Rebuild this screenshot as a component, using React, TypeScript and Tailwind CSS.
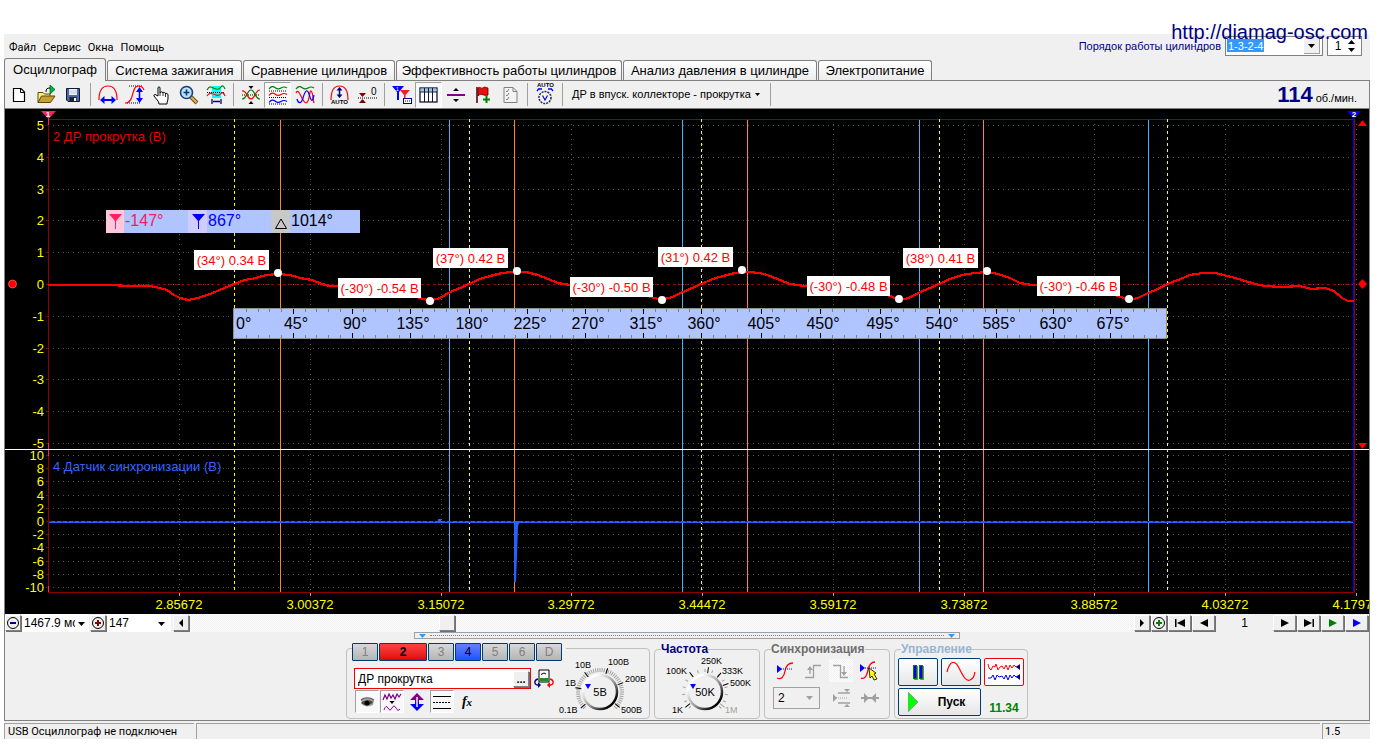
import type { ReactNode } from "react";
import clsx from "clsx";

const MENU = ["Файл", "Сервис", "Окна", "Помощь"];

const TABS = [
  { title: "Осциллограф", width: "w-[102px]" },
  { title: "Система зажигания", width: "w-[135px]" },
  { title: "Сравнение цилиндров", width: "w-[152px]" },
  { title: "Эффективность работы цилиндров", width: "w-[226px]" },
  { title: "Анализ давления в цилиндре", width: "w-[194px]" },
  { title: "Электропитание", width: "w-[114px]" },
];

const HATCH =
  "bg-[conic-gradient(#fff_25%,#f0f0f0_0_50%,#fff_0_75%,#f0f0f0_0)] bg-[length:2px_2px]";

const RAISED =
  "border border-t-white border-l-white border-r-[#808080] border-b-[#808080] bg-[#f0f0f0] shadow-[1px_1px_0_#707070]";

/* ---------- toolbar ---------- */

function Icon({ label, children }: { label: string; children: ReactNode }) {
  return (
    <svg
      viewBox="0 0 20 20"
      className="w-5 h-5 shrink-0 overflow-visible"
      fill="none"
      role="img"
      aria-label={label}
    >
      {children}
    </svg>
  );
}

function Tool({
  label,
  pressed,
  children,
}: {
  label: string;
  pressed?: boolean;
  children: ReactNode;
}) {
  return (
    <button
      type="button"
      aria-label={label}
      className={clsx(
        "w-[27px] h-[26px] flex items-center justify-center",
        pressed &&
          "border border-t-[#a0a0a0] border-l-[#a0a0a0] border-r-white border-b-white bg-[#f8f8f8]",
      )}
    >
      <Icon label={label}>{children}</Icon>
    </button>
  );
}

function Sep() {
  return <div className="w-px h-[23px] ml-1 mr-[3px] bg-[#a0a0a0]" />;
}

function Toolbar() {
  return (
    <div className="h-7 flex items-center border-b border-[#808080] pr-3">
      <Tool label="Новый">
        <path d="M4.500 3.500H12L15.500 7V16.500H4.500Z" fill="#fff" stroke="#000" strokeWidth="1.2" />
        <path d="M11.500 3.500V7.500H15.500" stroke="#000" />
      </Tool>
      <Tool label="Открыть">
        <path d="M2 17.500V7.500H7L8.500 9H14V11" fill="#ffec8b" stroke="#5a4a00" />
        <path d="M2 17.500L5.500 11H19L14.500 17.500Z" fill="#c8a032" stroke="#5a4a00" />
        <path d="M14 0V9L19 4.500Z" fill="#00b43c" stroke="#006420" strokeWidth=".8" />
        <path d="M10 7C10 4 11 3 14 3" stroke="#000" />
      </Tool>
      <Tool label="Сохранить">
        <path d="M3.500 3.500H16.500V16.500H5L3.500 15Z" fill="#4a68a8" stroke="#101830" />
        <rect x="6" y="4" width="8" height="6" fill="#f4f4ff" />
        <path d="M6 6H14M6 8H14" stroke="#9aa" strokeWidth=".6" />
        <rect x="6.500" y="12" width="7" height="4.500" fill="#222" />
        <rect x="11" y="13" width="2" height="3" fill="#fff" />
      </Tool>
      <Sep />
      <Tool label="Период">
        <path d="M1 15C1 3 6 1 10 1S19 3 19 15" stroke="#f00" strokeWidth="1.200" />
        <path d="M5 15H15" stroke="#00f" strokeWidth="2" />
        <path d="M2 15L6.500 11V19ZM18 15L13.500 11V19Z" fill="#00f" />
      </Tool>
      <Tool label="Амплитуда">
        <path d="M4 1H18M2 18H16" stroke="#000" strokeDasharray="1 1" />
        <path d="M0 18C10 18 6 1 13 1C16 1 18 2 19 5" stroke="#f00" strokeWidth="1.200" />
        <path d="M14.500 5V15" stroke="#00f" strokeWidth="1.600" />
        <path d="M14.500 2L18 7H11ZM14.500 18L18 13H11Z" fill="#00f" />
      </Tool>
      <Tool label="Рука">
        <path
          d="M6 11V3C6 1.500 8 1.500 8 3V8C8 6.500 11 6.500 11 8C11 7 13.500 7 13.500 9C13.500 8 16 8 16 10V13C16 16 15 16 15 19H7C7 16 4 14 2 11C1.500 9.500 3 9 4 10Z"
          fill="#fff"
          stroke="#000"
        />
        <path d="M8 8V11M11 8V11M13.500 9V12" stroke="#000" strokeWidth=".8" />
      </Tool>
      <Tool label="Масштаб">
        <path d="M12 12L18 18" stroke="#705018" strokeWidth="4" />
        <path d="M12 12L17.500 17.500" stroke="#e8b050" strokeWidth="2" />
        <circle cx="7.500" cy="7.500" r="6" fill="#b8e4f8" stroke="#203c78" strokeWidth="1.6" />
        <path d="M7.500 4.500V10.500M4.500 7.500H10.500" stroke="#103080" strokeWidth="1.600" />
      </Tool>
      <Tool label="Участок">
        <rect x="6" y="1" width="9" height="12" fill="#0ff" />
        <path d="M1 5Q3 1 5 2T10 4T15 2T19 4" stroke="#008000" strokeWidth="1.200" />
        <path d="M1 7.500H19" stroke="#000" strokeDasharray="1 1" />
        <path d="M1 11Q3 8 5 8.500T10 10T15 8.500T19 11" stroke="#f00" strokeWidth="1.200" />
        <path d="M6 14V19M15 14V19M7 16.500H14" stroke="#000080" strokeWidth="1.300" />
      </Tool>
      <Sep />
      <Tool label="Совместить">
        <path d="M7.500 1H12.500L10 4ZM7.500 19H12.500L10 16Z" fill="#000" />
        <path d="M1 10H19" stroke="#000" strokeDasharray="1 1" />
        <path d="M1 6C6 5 6 14 10 14S14 5 19 5" stroke="#f00" strokeWidth="1.200" />
        <path d="M1 14C6 14 6 5 10 5S14 14 19 14" stroke="#008000" strokeWidth="1.200" />
      </Tool>
      <Tool label="Разделить" pressed>
        <path d="M1 4Q4 0 7 2.500T13 3T19 3" stroke="#008000" strokeWidth="1.200" />
        <path d="M1 10.500Q4 6.500 7 9T13 9.500T19 9.500" stroke="#f00" strokeWidth="1.200" />
        <path d="M1 17.500Q4 13.500 7 16T13 16.500T19 16.500" stroke="#00f" strokeWidth="1.200" />
        <path d="M1 6H19M1 12.500H19M1 19H19" stroke="#000" strokeDasharray="1 1" />
      </Tool>
      <Tool label="Наложить">
        <path d="M1 4Q4 0 7 2.500T13 3T19 3" stroke="#008000" strokeWidth="1.200" />
        <path d="M1 8C4 1 7 18 11 18S14 5 16 6S18 15 19 18" stroke="#f00" strokeWidth="1.200" />
        <path d="M2 14C3 18 6 20 8 13S12 3 14 9S17 19 19 10" stroke="#00f" strokeWidth="1.200" />
      </Tool>
      <Sep />
      <Tool label="Автомасштаб">
        <path d="M1 15C1 4 5 1 9.500 1S18 4 18 15" stroke="#f00" strokeWidth="1.200" />
        <path d="M9.500 4V11" stroke="#000080" strokeWidth="1.500" />
        <path d="M9.500 2L12.500 5.500H6.500ZM9.500 13L12.500 9.500H6.500Z" fill="#000080" />
        <text x="1" y="19" fontSize="6" fontWeight="700" fill="#000">AUTO</text>
      </Tool>
      <Tool label="Обнулить">
        <path d="M1 13H20" stroke="#000" strokeDasharray="1 1" />
        <path d="M2 8H9L5.500 12ZM2 18H9L5.500 14Z" fill="#800000" />
        <text x="14" y="10" fontSize="10" fill="#000">0</text>
      </Tool>
      <Sep />
      <Tool label="Линейки">
        <path d="M0 1H12L7 7V15H5V7Z" fill="#00f" />
        <path d="M8 5H18L13.500 10V14H12V10Z" fill="#f02020" />
        <text x="4" y="6" fontSize="5" fill="#fff">1</text>
        <rect x="11.500" y="13.500" width="8" height="5" fill="#fff" stroke="#000080" />
        <path d="M13 16H18" stroke="#000080" strokeDasharray="1 1" />
      </Tool>
      <Tool label="Таблица" pressed>
        <rect x="1" y="3" width="17" height="14" fill="#fff" stroke="#101830" strokeWidth="1.300" />
        <rect x="1.500" y="3.500" width="16" height="3" fill="#a0c0e8" />
        <path d="M1 7H18M5.500 3V17M9.500 3V17M13.500 3V17" stroke="#101830" />
      </Tool>
      <Tool label="Разделитель">
        <path d="M1 10H19" stroke="#800080" strokeWidth="2" />
        <path d="M7 6H13L10 3ZM7 14H13L10 17Z" fill="#000" />
      </Tool>
      <Tool label="Флаг">
        <path d="M4 2V18" stroke="#400000" strokeWidth="1.500" />
        <path d="M5 3C7 1 9 5 11 2L15 3V10C12 12 8 7 5 11Z" fill="#e81010" stroke="#600000" strokeWidth=".8" />
        <path d="M13.500 11V18M10 14.500H17" stroke="#008000" strokeWidth="2" />
      </Tool>
      <Tool label="Отчёт">
        <path d="M4 2.500H13L17 6.500V17.500H4Z" fill="#f4f4f4" stroke="#808080" />
        <path d="M13 2.500V6.500H17M6 6L7 7L9 4M6 10L7 11L9 8M6 14L7 15L9 12" stroke="#808080" />
      </Tool>
      <Sep />
      <Tool label="Авто измерение">
        <text x="2" y="2" fontSize="6" fontWeight="700" fill="#000">AUTO</text>
        <circle cx="10" cy="12.500" r="6" fill="#f4f4f4" stroke="#303040" strokeWidth="1.600" strokeDasharray="2 1" />
        <path d="M7.500 10.500L10 15L12.500 10.500" stroke="#00f" strokeWidth="1.200" />
        <path d="M2 6L4 3.500M18 6L16 3.500M4 4H7M13 4H16" stroke="#00f" strokeWidth="1.300" />
      </Tool>
      <Sep />
      <button type="button" className="h-6 px-1.5 flex items-center gap-1 text-[11px]">
        ДР в впуск. коллекторе - прокрутка
        <svg viewBox="0 0 5 3" className="w-[5px] h-[3px]" aria-hidden="true">
          <path d="M0 0H5L2.500 3Z" />
        </svg>
      </button>
      <Sep />
      <div className="ml-auto flex items-baseline gap-[3px]">
        <span className="text-[22px] leading-6 font-bold text-[#000080]">114</span>
        <span className="text-[11px]">об./мин.</span>
      </div>
    </div>
  );
}

/* ---------- chart ---------- */

const GRID_X = [179, 310, 441, 571, 702, 833, 964, 1094, 1225, 1356];
const TIMES = [
  "2.85672", "3.00372", "3.15072", "3.29772", "3.44472",
  "3.59172", "3.73872", "3.88572", "4.03272", "4.17972",
];
const UPPER = [5, 4, 3, 2, 1, 0, -1, -2, -3, -4, -5];
const LOWER = [10, 8, 6, 4, 2, 0, -2, -4, -6, -8, -10];

const upperY = (v: number) => Math.round(284 - v * 31.8) + 0.5;
const lowerY = (v: number) => Math.round(521 - v * 6.6) + 0.5;

// dead centres, every 180 degrees
const STROKES = [234, 469, 701, 939, 1167];
const angleX = (deg: number) => {
  const i = Math.min(3, Math.floor(deg / 180));
  return STROKES[i] + ((STROKES[i + 1] - STROKES[i]) * (deg - i * 180)) / 180;
};

const PEAKS = [280, 514, 747, 983];
const VALLEYS = [449, 682, 919, 1148];

const MARKS = [
  { x: 194, y: 250, w: 75, text: "(34°) 0.34 В", dot: [278, 273] },
  { x: 338, y: 278, w: 83, text: "(-30°) -0.54 В", dot: [430, 301] },
  { x: 433, y: 248, w: 75, text: "(37°) 0.42 В", dot: [517, 271] },
  { x: 570, y: 277, w: 83, text: "(-30°) -0.50 В", dot: [662, 300] },
  { x: 658, y: 247, w: 75, text: "(31°) 0.42 В", dot: [742, 270] },
  { x: 807, y: 276, w: 83, text: "(-30°) -0.48 В", dot: [899, 299] },
  { x: 903, y: 248, w: 75, text: "(38°) 0.41 В", dot: [987, 271] },
  { x: 1037, y: 276, w: 83, text: "(-30°) -0.46 В", dot: [1129, 299] },
];

const PRESSURE =
  "48,285 70,285 90,285 110,285 130,286 150,286 160,288 167,290 174,295 180,298 188,300 198,298 210,294 222,289 234,284 245,280 256,278 266,275 278,274 290,275 300,278 312,280 322,284 330,286 345,286 380,287 400,290 417,297 430,301 440,298 450,292 460,288 469,284 480,279 490,276 502,273 512,272 526,272 538,275 548,279 558,283 570,285 610,286 635,290 651,297 662,300 672,297 683,292 692,288 701,284 713,279 723,276 735,273 748,272 760,273 770,276 780,280 790,284 805,286 845,287 870,289 890,296 899,300 909,298 920,292 930,288 939,284 950,279 962,275 975,273 987,272 998,274 1010,278 1020,283 1032,285 1075,286 1100,289 1118,296 1129,300 1138,298 1148,293 1158,289 1167,284 1178,280 1190,275 1203,273 1215,273 1228,276 1242,280 1255,284 1265,286 1282,287 1300,286 1311,289 1325,288 1334,291 1342,298 1348,301 1354,301";

function Chart() {
  return (
    <svg
      viewBox="5 109 1364 505"
      className="block w-full h-auto bg-black"
      fontSize="13"
      role="img"
      aria-label="Осциллограмма"
    >
      {/* grid */}
      <g stroke="#5a5a5a" strokeDasharray="1 4">
        {UPPER.map((v) => (
          <path key={v} d={`M53 ${upperY(v)}H1352`} />
        ))}
        {LOWER.map((v) => (
          <path key={v} d={`M53 ${lowerY(v)}H1352`} />
        ))}
        {GRID_X.map((x) => (
          <path key={x} d={`M${x + 0.5} 124V592`} />
        ))}
      </g>
      <path d="M49 284.500H1353" stroke="#900000" strokeDasharray="3 3" />

      {/* axes */}
      <path d="M48.500 119.500H1354.500V592.500H48.500Z" fill="none" stroke="#900000" />
      <path d="M48.500 117V125M48.500 443V456M48.500 586V592" stroke="#ff2060" />
      <g fill="#ffff00" textAnchor="end">
        {UPPER.map((v) => (
          <text key={v} x="44" y={upperY(v) + 4.500}>{v}</text>
        ))}
        {LOWER.map((v) => (
          <text key={v} x="44" y={lowerY(v) + 4.500}>{v}</text>
        ))}
      </g>
      <g stroke="#900000">
        {[...UPPER.map(upperY), ...LOWER.map(lowerY)].map((y) => (
          <path key={y} d={`M46 ${y}H48`} />
        ))}
      </g>
      <g fill="#ffff00" textAnchor="middle">
        {TIMES.map((t, i) => (
          <text key={t} x={GRID_X[i]} y="609">{t}</text>
        ))}
      </g>
      <path
        d={GRID_X.map((x) => `M${x + 0.5} 593V596`).join("")}
        stroke="#a0a0a0"
      />

      {/* cursors */}
      {STROKES.map((x) => (
        <path key={x} d={`M${x + 0.5} 119V592`} stroke="#ffff00" strokeDasharray="3 3" />
      ))}
      {PEAKS.map((x) => (
        <path key={x} d={`M${x + 0.5} 120V592`} stroke="#ff7f3c" />
      ))}
      {VALLEYS.map((x) => (
        <path key={x} d={`M${x + 0.5} 120V592`} stroke="#46b4f5" />
      ))}
      <path d="M1353.500 112V592" stroke="#0000ff" />
      <path d="M5 449.500H1369" stroke="#ffffff" />

      {/* signals */}
      <polyline
        points={PRESSURE}
        fill="none"
        stroke="#ff0000"
        strokeWidth="2.200"
        shapeRendering="crispEdges"
      />
      <path d="M49 522H1353" stroke="#2860ff" strokeWidth="2" />
      <path d="M49 521.500H1353" stroke="#900000" strokeDasharray="2 4" />
      <path d="M514 521H520L518 526L517 555L516 582H514Z" fill="#2860ff" />
      <rect x="438" y="519" width="3" height="3" fill="#2860ff" />
      <text x="53" y="141" fill="#e60000">2 ДР прокрутка (В)</text>
      <text x="53" y="471" fill="#3264ff">4 Датчик синхронизации (В)</text>

      {/* cursor readout */}
      <g>
        <rect x="106" y="210" width="254" height="23" fill="#b0c4ff" />
        <rect x="106" y="210" width="18" height="23" fill="#ffc8dc" />
        <rect x="188" y="210" width="19" height="23" fill="#d0ccff" />
        <rect x="271" y="210" width="19" height="23" fill="#c8c8c8" />
        <path d="M109 214H122L116 221V229H115V221Z" fill="#ff2060" />
        <path d="M192 214H205L199 221V229H198V221Z" fill="#0000ff" />
        <path d="M281 219L286.500 228.500H275.500Z" fill="none" stroke="#000" />
        <g fontSize="16">
          <text x="125" y="226" fill="#f02060">-147°</text>
          <text x="208" y="226" fill="#0000ff">867°</text>
          <text x="291" y="226">1014°</text>
        </g>
      </g>

      {/* angle ruler */}
      <rect x="233.500" y="308.500" width="933" height="30" fill="#b0c4ff" stroke="#909090" />
      {Array.from({ length: 79 }, (_, i) => (i + 1) * 9).map((deg) => {
        const x = Math.round(angleX(deg)) + 0.5;
        const major = deg % 45 === 0;
        const len = major ? 5 : 3;
        return (
          <path
            key={deg}
            d={`M${x} 309V${309 + len}M${x} 338V${338 - len}`}
            stroke={major ? "#000" : "#808080"}
          />
        );
      })}
      <g fontSize="16">
        <text x="236" y="329">0°</text>
        {Array.from({ length: 15 }, (_, i) => (i + 1) * 45).map((deg) => (
          <text key={deg} x={Math.round(angleX(deg)) + 3} y="329" textAnchor="middle">
            {deg}°
          </text>
        ))}
      </g>

      {/* measured extrema */}
      {MARKS.map((m) => (
        <g key={m.x}>
          <rect x={m.x} y={m.y} width={m.w} height="20" fill="#fff" />
          <text x={m.x + m.w / 2} y={m.y + 15} fill="#ff0000" textAnchor="middle">
            {m.text}
          </text>
          <circle cx={m.dot[0]} cy={m.dot[1]} r="4" fill="#fff" />
        </g>
      ))}

      {/* handles */}
      <path d="M41 111H56L48.500 119Z" fill="#ff2060" />
      <path d="M1347 111H1361L1354 119Z" fill="#0000ff" />
      <g fontSize="8" fontWeight="700" fill="#fff" textAnchor="middle">
        <text x="48" y="117">1</text>
        <text x="1354" y="117">2</text>
      </g>
      <circle cx="12.500" cy="284" r="4" fill="#ff0000" stroke="#ff8080" strokeWidth=".6" />
      <path d="M1362.500 279L1367 284L1362.500 289L1358 284Z" fill="#ff0000" />
      <path d="M1362.500 120L1367 126H1358Z" fill="#ff0000" />
      <path d="M1362.500 449L1358 443H1367Z" fill="#ff0000" />
    </svg>
  );
}

/* ---------- navigation row under the chart ---------- */

function NavButton({
  label,
  wide,
  children,
}: {
  label: string;
  wide?: boolean;
  children: ReactNode;
}) {
  return (
    <button
      type="button"
      aria-label={label}
      className={clsx(
        "h-4 mr-px shrink-0 flex items-center justify-center",
        wide ? "w-[23px]" : "w-4",
        RAISED,
      )}
    >
      <svg viewBox="0 0 14 14" className="w-3.5 h-3.5 shrink-0" aria-hidden="true">
        {children}
      </svg>
    </button>
  );
}

function DownArrow({ className }: { className?: string }) {
  return (
    <svg
      viewBox="0 0 7 4"
      className={clsx("w-[7px] h-1 pointer-events-none", className)}
      aria-hidden="true"
    >
      <path d="M0 0H7L3.500 4Z" fill="currentColor" />
    </svg>
  );
}

function NavRow() {
  return (
    <div className="h-[18px] flex items-center">
      <NavButton label="Уменьшить">
        <circle cx="7" cy="7" r="5.500" fill="none" stroke="#000" />
        <path d="M4 7H10" stroke="#000080" strokeWidth="2" />
      </NavButton>
      <div className="relative w-[67px] h-full mr-px bg-white">
        <select
          aria-label="Развёртка"
          className="block appearance-none w-[53px] h-full pl-0.5 text-[12px] leading-[18px] overflow-hidden text-clip"
        >
          <option>1467.9 мс</option>
        </select>
        <DownArrow className="absolute right-1 top-2" />
      </div>
      <NavButton label="Увеличить">
        <circle cx="7" cy="7" r="5.500" fill="none" stroke="#000" />
        <path d="M4 7H10M7 4V10" stroke="#800000" strokeWidth="2" />
      </NavButton>
      <div className="relative w-16 h-full mr-0.5 bg-white">
        <select
          aria-label="Кадр"
          className="block appearance-none w-full h-full pl-0.5 text-[12px] leading-[18px]"
        >
          <option>147</option>
        </select>
        <DownArrow className="absolute right-1.5 top-2" />
      </div>
      <NavButton label="Влево">
        <path d="M9 3V11L5 7Z" />
      </NavButton>
      <div className={clsx("flex-1 h-full flex items-center", HATCH)}>
        <div className="grow-[25]" />
        <div className={clsx("w-4 h-4", RAISED)} />
        <div className="grow-[68]" />
      </div>
      <NavButton label="Вправо">
        <path d="M5 3V11L9 7Z" />
      </NavButton>
      <NavButton label="Добавить">
        <circle cx="7" cy="7" r="5.500" fill="none" stroke="#000" />
        <path d="M4 7H10M7 4V10" stroke="#008000" strokeWidth="2" />
      </NavButton>
      <NavButton label="В начало" wide>
        <path d="M2 3H3.500V11H2ZM12 3V11L4 7Z" />
      </NavButton>
      <NavButton label="Назад" wide>
        <path d="M11 3V11L3 7Z" />
      </NavButton>
      <span className="w-[57px] text-center text-[12px]">1</span>
      <NavButton label="Вперёд" wide>
        <path d="M3 3V11L11 7Z" />
      </NavButton>
      <NavButton label="В конец" wide>
        <path d="M2 3V11L10 7ZM10.500 3H12V11H10.500Z" />
      </NavButton>
      <NavButton label="Просмотр" wide>
        <path d="M3 3V11L11 7Z" fill="#008000" />
      </NavButton>
      <NavButton label="Просмотр всех" wide>
        <path d="M3 3V11L11 7Z" fill="#0000ff" />
      </NavButton>
    </div>
  );
}

/* ---------- control panels ---------- */

const CHANNELS = ["1", "2", "3", "4", "5", "6", "D"];

const GROUP = "h-[76px] min-w-0 border border-[#c0c0c0] rounded-[4px]";

function Knob({
  cx,
  value,
  fine,
  labels,
}: {
  cx: number;
  value: string;
  fine?: boolean;
  labels: { x: number; y: number; angle: number; text: string; off?: boolean }[];
}) {
  const minor = Array.from({ length: fine ? 49 : 15 }, (_, i) =>
    fine ? -135 + i * 5.625 : -135 + i * 19.3,
  );
  return (
    <svg
      viewBox="0 0 96 64"
      className="w-24 h-16 shrink-0 overflow-visible"
      fontSize="9"
      role="img"
      aria-label={value}
    >
      <defs>
        <linearGradient id={`rim${cx}`} x1="0" y1="0" x2="1" y2="1">
          <stop offset="0.200" stopColor="#fff" />
          <stop offset="0.550" stopColor="#999" />
          <stop offset="0.850" stopColor="#000" />
        </linearGradient>
      </defs>
      {minor.map((a) => (
        <path
          key={a}
          d={fine ? "M0 -20V-24" : "M0 -20V-23"}
          stroke="#a0a0a0"
          transform={`translate(${cx} 37) rotate(${a})`}
        />
      ))}
      {labels.map((l) => (
        <g key={l.text} fill={l.off ? "#a0a0a0" : "#000"}>
          <path
            d="M0 -19V-25"
            stroke={l.off ? "#a0a0a0" : "#000"}
            transform={`translate(${cx} 37) rotate(${l.angle})`}
          />
          <text x={l.x} y={l.y}>{l.text}</text>
        </g>
      ))}
      <circle cx={cx} cy="37" r="17" fill="#f0f0f0" stroke={`url(#rim${cx})`} strokeWidth="2.500" />
      <path d={`M${cx - 15} 29H${cx - 9}L${cx - 12} 34Z`} fill="#0000ff" />
      <text x={cx} y="41" fontSize="11" textAnchor="middle">{value}</text>
    </svg>
  );
}

function PanelIcon({
  label,
  pressed,
  children,
}: {
  label: string;
  pressed?: boolean;
  children: ReactNode;
}) {
  return (
    <button
      type="button"
      aria-label={label}
      className={clsx(
        "w-6 h-[23px] shrink-0 flex items-center justify-center",
        pressed &&
          "border border-t-[#a0a0a0] border-l-[#a0a0a0] border-r-white border-b-white bg-[#f8f8f8]",
      )}
    >
      <Icon label={label}>{children}</Icon>
    </button>
  );
}

function ChannelGroup() {
  return (
    <fieldset className={clsx(GROUP, "w-[304px]")}>
      <legend className="ml-[5px] h-[10px] flex gap-px pr-1">
        {CHANNELS.map((c) => (
          <button
            key={c}
            type="button"
            className={clsx(
              "h-[18px] border border-[#003c74] rounded-[1px] text-[12px] leading-4",
              c === "2" && "w-12 bg-linear-to-b from-[#ff4040] to-[#e00000] font-bold",
              c === "4" && "w-[26px] bg-linear-to-b from-[#6080ff] to-[#2050ff]",
              c !== "2" && c !== "4" &&
                "w-[26px] bg-linear-to-b from-[#d8d8d8] to-[#b4b4b4] text-[#808080]",
            )}
          >
            {c}
          </button>
        ))}
      </legend>
      <div className="flex">
        <div className="w-[204px] pl-[7px] pt-[15px]">
          <div className="flex items-center gap-[3px]">
            <div className="w-[177px] h-[21px] flex items-center border border-[#f00000] bg-white p-px">
              <input
                aria-label="Название канала"
                defaultValue="ДР прокрутка"
                className="min-w-0 flex-1 pl-0.5 text-[12px] leading-4 outline-none"
              />
              <button
                type="button"
                aria-label="Выбрать"
                className={clsx("w-4 h-4 text-[11px] leading-[8px] font-bold", RAISED)}
              >
                ...
              </button>
            </div>
            <button type="button" aria-label="Датчик" className="w-5 h-5">
              <Icon label="Датчик">
                <path d="M5 1H15V13H5Z" fill="#fff" stroke="#000" />
                <path d="M5.500 9H14.500V12.500H5.500Z" fill="#209020" />
                <path d="M7 5.500L10 4L12 5" stroke="#000" />
                <path d="M4 10C0 11 0 15 3 16H5" stroke="#000080" strokeWidth="1.300" />
                <path d="M4 13L7 16L4 19Z" fill="#000080" />
                <path d="M16 10C20 11 20 15 17 16H15" stroke="#f00" strokeWidth="1.300" />
                <path d="M16 13L13 16L16 19Z" fill="#f00" />
              </Icon>
            </button>
          </div>
          <div className="mt-px ml-px flex gap-px">
            <PanelIcon label="Показать" pressed>
              <path d="M4 8C7 5 14 5 17 8L16 13C12 15 7 15 5 12Z" fill="#a0a098" />
              <path d="M4 11C7 8 13 8 16 10C14 14 7 14 4 11Z" fill="#504840" />
              <circle cx="10" cy="11" r="2.500" fill="#000" />
              <path d="M4 8C7 5 13 5 17 8" stroke="#606060" strokeWidth="1.200" />
            </PanelIcon>
            <PanelIcon label="Фильтр" pressed>
              <path d="M1 8L3 3L5 7L7 2L9 6L11 3L13 7L15 2L17 5L19 2" stroke="#800080" strokeWidth="1.200" />
              <path d="M7.500 9H12.500L10 12Z" fill="#000" />
              <path d="M2 18Q4 12 6 16T10 16T14 16T18 17" stroke="#a000a0" />
            </PanelIcon>
            <PanelIcon label="Инверсия">
              <path d="M10 1L17 8H12V10H8V8H3Z" fill="#800080" />
              <path d="M10 19L17 12H12V10H8V12H3Z" fill="#0000ff" />
              <path d="M10 5V15" stroke="#f0f0f0" strokeWidth="1.500" />
            </PanelIcon>
            <PanelIcon label="Границы" pressed>
              <path d="M1 4.500H19M1 16.500H19" stroke="#000" />
              <path d="M1 10.500H19" stroke="#000" strokeDasharray="2 1" />
            </PanelIcon>
            <button
              type="button"
              aria-label="Функция"
              className="w-6 h-[23px] font-['Liberation_Serif',serif] text-[14px] leading-5 font-bold italic"
            >
              f<span className="text-[11px]">x</span>
            </button>
          </div>
        </div>
        <div className="pt-0.5">
          <Knob
            cx={49}
            value="5В"
            fine
            labels={[
              { x: 8, y: 58, angle: -130, text: "0.1В" },
              { x: 14, y: 31, angle: -80, text: "1В" },
              { x: 24, y: 13, angle: -38, text: "10В" },
              { x: 57, y: 10, angle: 18, text: "100В" },
              { x: 74, y: 27, angle: 68, text: "200В" },
              { x: 70, y: 58, angle: 128, text: "500В" },
            ]}
          />
        </div>
      </div>
    </fieldset>
  );
}

function FrequencyGroup() {
  return (
    <fieldset className={clsx(GROUP, "w-[106px]")}>
      <legend className="ml-1.5 h-3 text-[12px] leading-3 font-bold text-[#000080]">
        Частота
      </legend>
      <Knob
        cx={50}
        value="50K"
        labels={[
          { x: 17, y: 58, angle: -128, text: "1K" },
          { x: 11, y: 19, angle: -38, text: "100K" },
          { x: 46, y: 9, angle: 8, text: "250K" },
          { x: 67, y: 19, angle: 40, text: "333K" },
          { x: 75, y: 31, angle: 70, text: "500K" },
          { x: 70, y: 58, angle: 128, text: "1M", off: true },
        ]}
      />
    </fieldset>
  );
}

function SyncGroup() {
  return (
    <fieldset className={clsx(GROUP, "w-[126px]")}>
      <legend className="ml-1.5 h-3 text-[12px] leading-3 font-bold text-[#6e6e6e]">
        Синхронизация
      </legend>
      <div className="flex gap-1 pl-2 pt-1">
        <PanelIcon label="Уровень">
          <path d="M2 17C6 19 9 16 10 10S14 2 18 2" stroke="#f00" strokeWidth="1.300" />
          <path d="M2 8H18" stroke="#00f" strokeDasharray="1 1" />
          <path d="M2 4L7 8L2 12Z" fill="#00f" />
        </PanelIcon>
        <PanelIcon label="Фронт">
          <path d="M2 16.500H10.500V4.500H18M7 13V7" stroke="#a0a0a0" strokeWidth="1.300" />
          <path d="M4 9H10L7 5Z" fill="#a0a0a0" />
        </PanelIcon>
        <div className={HATCH}>
          <PanelIcon label="Спад">
            <path d="M2 4.500H9.500V16.500H17M13 5V11" stroke="#a0a0a0" strokeWidth="1.300" />
            <path d="M10 11H16L13 15Z" fill="#a0a0a0" />
          </PanelIcon>
        </div>
        <PanelIcon label="Установить">
          <path d="M2 17C6 19 8 14 9 9S13 1 16 1" stroke="#f00" strokeWidth="1.300" />
          <path d="M2 7H18" stroke="#00f" strokeDasharray="1 1" />
          <path d="M1 3L6 7L1 11Z" fill="#00f" />
          <path d="M10 7L17 12L15 13L18 18L15 19L13 15L11 17Z" fill="#ffff00" stroke="#000" strokeWidth=".8" />
        </PanelIcon>
      </div>
      <div className="flex items-center pl-2 pt-1">
        <div className="relative w-[47px] h-[22px] mr-2.5 border border-[#a0a0a0] text-[#a0a0a0]">
          <select
            aria-label="Канал синхронизации"
            className="block appearance-none w-full h-full pl-1 text-[12px] leading-4 text-black"
          >
            <option>2</option>
          </select>
          <DownArrow className="absolute right-1.5 top-2" />
        </div>
        <PanelIcon label="Гистерезис">
          <path d="M6 5H18M6 15H18" stroke="#a0a0a0" strokeWidth="1.500" />
          <path d="M2 10H16" stroke="#a0a0a0" strokeDasharray="1 1" />
          <path d="M1 6L5 10L1 14ZM12 1H18L15 4ZM12 19H18L15 16Z" fill="#a0a0a0" />
        </PanelIcon>
        <div className="w-1" />
        <PanelIcon label="Центр">
          <path d="M1 10H19" stroke="#a0a0a0" strokeWidth="2" />
          <path d="M4 5L9 10L4 15ZM16 5L11 10L16 15Z" fill="#a0a0a0" />
        </PanelIcon>
      </div>
    </fieldset>
  );
}

const PUSH =
  "flex items-center justify-center border border-[#003c74] rounded-[2px] bg-linear-to-b from-white to-[#e6e6e6]";

function ControlGroup() {
  return (
    <fieldset className={clsx(GROUP, "w-[134px]")}>
      <legend className="ml-1.5 h-3 text-[12px] leading-3 font-bold text-[#99b4d1]">
        Управление
      </legend>
      <div className="px-[3px] pt-[3px] flex flex-wrap gap-x-[3px] gap-y-0.5">
        <button type="button" aria-label="Пауза" className={clsx("w-10 h-7", PUSH)}>
          <svg viewBox="0 0 12 16" className="w-3 h-4" aria-hidden="true">
            <path d="M2 2H6V16H2ZM8 2H12V16H8Z" fill="#808080" />
            <path d="M1 1H5V15H1ZM7 1H11V15H7Z" fill="#008000" />
            <path d="M2 2H4V14H2ZM8 2H10V14H8Z" fill="#0000ff" />
          </svg>
        </button>
        <button type="button" aria-label="Синус" className={clsx("w-10 h-7", PUSH)}>
          <svg viewBox="0 0 30 20" className="w-[30px] h-5" fill="none" aria-hidden="true">
            <path d="M1 10C4 -2 9 -2 13 6S20 20 24 18S28 14 29 10" stroke="#f00" strokeWidth="1.200" />
          </svg>
        </button>
        <button
          type="button"
          aria-label="Запись"
          className="w-10 h-7 flex items-center justify-center border border-[#f00000] rounded-[2px] bg-white"
        >
          <svg viewBox="0 0 34 20" className="w-[34px] h-5" fill="none" aria-hidden="true">
            <path d="M1 2L2 6L4 8L6 4L8 5L9 2L11 8L13 5L15 4L17 7L19 3L21 8L23 3L25 6L27 3L29 5L31 4" stroke="#f00" />
            <path d="M1 16H4L6 13L8 18L10 13L12 15L15 14L17 17L19 13L21 18L23 13L25 16L27 13L29 15L31 14" stroke="#00f" />
            <path d="M33 2V8L29 5ZM33 12V18L29 15Z" fill="#000080" />
          </svg>
        </button>
        <button
          type="button"
          className={clsx("w-[83px] h-7 gap-5 pr-1.5 text-[12px] font-bold", PUSH)}
        >
          <svg viewBox="0 0 10 20" className="w-2.5 h-5" aria-hidden="true">
            <path d="M0 0L10 10L0 20Z" fill="#00ff00" stroke="#909090" strokeWidth=".8" />
          </svg>
          Пуск
        </button>
        <output className="w-10 self-end text-center text-[12px] leading-4 font-bold text-[#008000]">
          11.34
        </output>
      </div>
    </fieldset>
  );
}

function Splitter() {
  return (
    <div className="w-2/5 h-[7px] mx-auto px-1 flex items-center gap-1 border border-[#a0a0a0] text-[#3399ff]">
      <DownArrow />
      <div className="flex-1 border-t border-dotted border-[#3399ff]" />
      <DownArrow />
    </div>
  );
}

export default function App() {
  return (
    <div className="relative min-h-screen bg-white pt-[34px] pl-1 pr-3 pb-1 font-['Liberation_Sans',Arial,sans-serif] text-black">
      <a
        href="http://diamag-osc.com"
        className="absolute z-10 top-5 right-3.5 text-[20px] leading-6 text-[#000080]"
      >
        http://diamag-osc.com
      </a>

      <div className="bg-[#f0f0f0]">
        <header className="h-6 flex items-center justify-between">
          <nav className="flex gap-[7px] pl-[5px] pt-1 font-[Roboto,sans-serif] text-[11px]">
            {MENU.map((item) => (
              <button key={item} type="button">{item}</button>
            ))}
          </nav>
          <div className="flex items-center gap-1 pr-2">
            <label htmlFor="order" className="text-[11px] text-[#000080]">
              Порядок работы цилиндров
            </label>
            <div className="relative w-[98px] h-5 border border-[#808080] bg-white">
              <select
                id="order"
                className="block appearance-none w-full h-full pl-0.5 text-[11px] leading-4 text-white bg-[linear-gradient(#3399ff,#3399ff)] bg-[length:37px_13px] bg-[position:1px_2px] bg-no-repeat"
              >
                <option>1-3-2-4</option>
              </select>
              <span className="absolute right-0.5 top-px w-4 h-4 flex items-center justify-center pointer-events-none border-r border-b border-[#a0a0a0] bg-[#f0f0f0]">
                <DownArrow />
              </span>
            </div>
            <div className="flex items-center w-[35px] h-5 border border-[#808080] bg-white">
              <input
                aria-label="Номер цилиндра"
                defaultValue="1"
                className="w-5 text-center text-[12px] leading-4 outline-none"
              />
              <svg viewBox="0 0 7 12" className="w-[7px] h-3" aria-hidden="true">
                <path d="M0 4H7L3.500 0ZM0 8H7L3.500 12Z" />
              </svg>
            </div>
          </div>
        </header>

        <div className="h-[23px] flex items-end gap-px border-b border-[#808080]" role="tablist">
          {TABS.map((tab, i) => (
            <button
              key={tab.title}
              type="button"
              role="tab"
              aria-selected={i === 0}
              className={clsx(
                "border border-b-0 border-[#808080] rounded-t-[3px] text-[13px] leading-4 whitespace-nowrap",
                tab.width,
                i === 0
                  ? "h-[23px] -mb-px bg-[#f0f0f0]"
                  : "h-5 bg-linear-to-b from-white to-[#ececec]",
              )}
            >
              {tab.title}
            </button>
          ))}
        </div>

        <main className="border-l border-r border-b border-[#808080]">
          <Toolbar />
          <Chart />
          <NavRow />
          <Splitter />
          <div className="flex justify-center gap-1 pt-1 pb-px">
            <ChannelGroup />
            <FrequencyGroup />
            <SyncGroup />
            <ControlGroup />
          </div>
        </main>

        <footer className="flex gap-0.5 pt-0.5 font-[Roboto,sans-serif] text-[11px] leading-4">
          <span className="w-[190px] h-4 pl-[3px] border-t border-l border-[#a0a0a0]">
            USB Осциллограф не подключен
          </span>
          <span className="flex-1 h-4 border-t border-l border-[#a0a0a0]" />
          <span className="w-12 h-4 pl-0.5 border-t border-l border-[#a0a0a0]">1.5</span>
        </footer>
      </div>
    </div>
  );
}
